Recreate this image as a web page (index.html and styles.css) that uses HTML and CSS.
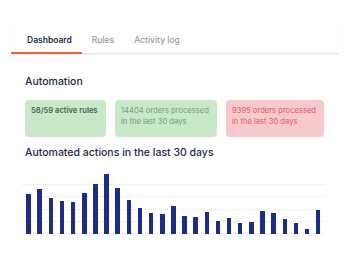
FILE: index.html
```html
<!DOCTYPE html>
<html lang="en">
<head>
    <meta charset="UTF-8">
    <title>Dashboard</title>
    <link rel="stylesheet" href="styles.css">
</head>
<body>
    <div id="page">
        <div id="tabs">
            <div class="tab active">Dashboard</div>
            <div class="tab">Rules</div>
            <div class="tab">Activity log</div>
        </div>
        <div id="content">
            <div class="heading">Automation</div>
            <div id="cards">
                <div class="card green rules">58/59 active rules</div>
                <div class="card green light">14404 orders processed<br>in the last 30 days</div>
                <div class="card red">9395 orders processed<br>in the last 30 days</div>
            </div>
            <div class="heading chartTitle">Automated actions in the last 30 days</div>
            <div id="chart">
                <div class="gridLines">
                    <div class="line"></div>
                    <div class="line"></div>
                    <div class="line"></div>
                    <div class="line"></div>
                    <div class="line"></div>
                </div>
                <div class="bars">
                    <div class="slot"><div class="bar" style="height: 40px"></div></div>
                    <div class="slot"><div class="bar" style="height: 45px"></div></div>
                    <div class="slot"><div class="bar" style="height: 36px"></div></div>
                    <div class="slot"><div class="bar" style="height: 33px"></div></div>
                    <div class="slot"><div class="bar" style="height: 32px"></div></div>
                    <div class="slot"><div class="bar" style="height: 41px"></div></div>
                    <div class="slot"><div class="bar" style="height: 50px"></div></div>
                    <div class="slot"><div class="bar peak" style="height: 62px"></div></div>
                    <div class="slot"><div class="bar" style="height: 46px"></div></div>
                    <div class="slot"><div class="bar" style="height: 34px"></div></div>
                    <div class="slot"><div class="bar" style="height: 26px"></div></div>
                    <div class="slot"><div class="bar" style="height: 21px"></div></div>
                    <div class="slot"><div class="bar" style="height: 20px"></div></div>
                    <div class="slot"><div class="bar" style="height: 28px"></div></div>
                    <div class="slot"><div class="bar" style="height: 18px"></div></div>
                    <div class="slot"><div class="bar" style="height: 17px"></div></div>
                    <div class="slot"><div class="bar" style="height: 22px"></div></div>
                    <div class="slot"><div class="bar" style="height: 13px"></div></div>
                    <div class="slot"><div class="bar" style="height: 16px"></div></div>
                    <div class="slot"><div class="bar" style="height: 11px"></div></div>
                    <div class="slot"><div class="bar" style="height: 12px"></div></div>
                    <div class="slot"><div class="bar" style="height: 23px"></div></div>
                    <div class="slot"><div class="bar" style="height: 21px"></div></div>
                    <div class="slot"><div class="bar" style="height: 15px"></div></div>
                    <div class="slot"><div class="bar" style="height: 11px"></div></div>
                    <div class="slot"><div class="bar" style="height: 5px"></div></div>
                    <div class="slot"><div class="bar" style="height: 24px"></div></div>
                </div>
            </div>
        </div>
    </div>
</body>
</html>
```

FILE: styles.css
```css
* {
    margin: 0;
    padding: 0;
    box-sizing: border-box;
}
body {
    background-color: white;
    font-family: 'Inter', sans-serif;
    color: #1f2a44;
}
#page {
    padding: 27px 12px 0 11px;
}
#tabs {
    display: flex;
    border-bottom: 1px solid #e4e4e4;
    box-shadow: 0 1px 1px #f0f0f0;
}
.tab {
    height: 27px;
    line-height: 26px;
    padding: 0 10px;
    font-size: 8.5px;
    font-weight: 500;
    color: #9a9a9a;
    margin-bottom: -1px;
}
.tab.active {
    padding-left: 16px;
    font-weight: 600;
    color: #1f2a44;
    border-bottom: 2px solid #e8643c;
}
#content {
    padding: 0 2px 0 14px;
}
.heading {
    font-size: 10.5px;
    font-weight: 500;
    margin-top: 21px;
    line-height: 14px;
}
#cards {
    display: flex;
    gap: 9px;
    margin-top: 11px;
}
.card {
    border-radius: 4px;
    padding: 5px 6px;
    height: 37px;
    font-size: 7.6px;
    line-height: 11px;
    white-space: nowrap;
}
.card.green {
    background-color: #c9e8c8;
    color: #6fa373;
}
.card.rules {
    width: 81px;
    font-weight: 600;
    color: #3f6a45;
}
.card.light {
    width: 102px;
}
.card.red {
    width: 98px;
    background-color: #f7c9cc;
    color: #de5a67;
}
.chartTitle {
    margin-top: 9px;
}
#chart {
    display: grid;
    margin: 13px 0 0 -2px;
    width: 301px;
    height: 61px;
}
.gridLines, .bars {
    grid-area: 1 / 1;
}
.gridLines {
    display: flex;
    flex-direction: column;
    padding-top: 11px;
    gap: 11.25px;
}
.line {
    border-top: 1px dotted #e2e2e2;
}
.bars {
    display: flex;
    align-items: flex-end;
}
.slot {
    flex: 1;
    display: flex;
    justify-content: center;
}
.bar {
    width: 4.5px;
    background-color: #1b2d84;
}
.bar.peak {
    margin-bottom: -2px;
}
```
